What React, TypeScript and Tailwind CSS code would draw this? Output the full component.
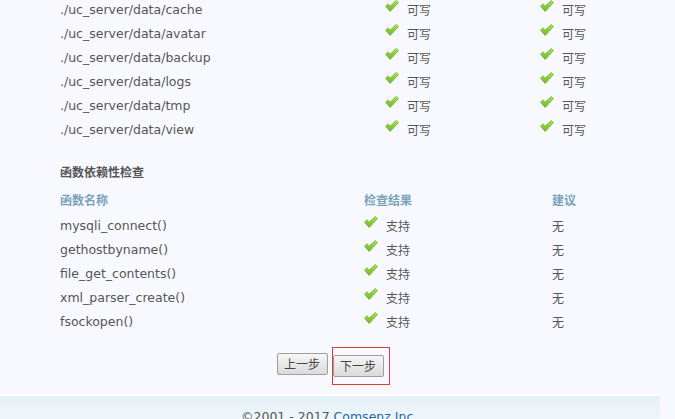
import React from 'react';

const dirs = ['cache', 'avatar', 'backup', 'logs', 'tmp', 'view'];
const funcs = ['mysqli_connect()', 'gethostbyname()', 'file_get_contents()', 'xml_parser_create()', 'fsockopen()'];

const latin = { fontFamily: '"DejaVu Sans", Verdana, sans-serif' };
const cjk = { fontFamily: '"Noto Sans CJK SC", "DejaVu Sans", sans-serif' };

function Check() {
    return <svg width="14" height="12" viewBox="0 0 14 12" className="-mt-2 shrink-0">
        <defs>
            <linearGradient id="ck" x1="0" y1="0" x2="0" y2="1">
                <stop offset="0" stopColor="#a8e64a" />
                <stop offset="1" stopColor="#6cb82a" />
            </linearGradient>
        </defs>
        <path d="M0.5 6.2 L3 3.8 L5.2 6 L11.2 0.4 L13.6 2.6 L5.2 11.5 Z" fill="url(#ck)" stroke="#5e9e24" strokeWidth="0.6" strokeLinejoin="round" />
    </svg>;
}

function Status({ text }: { text: string }) {
    return <div className="flex items-center gap-[8px]">
        <Check />
        <span style={cjk} className="text-[12px] text-[#555]">{text}</span>
    </div>;
}

export default function App() {
    return <div className="min-h-screen bg-[#f8f9fe] overflow-hidden">
        <div className="w-[660px]">
            <div className="pl-[60px] h-[396px]">
                {/* directory permissions */}
                <div className="-mt-[2px]">
                    {dirs.map(d => <div key={d} className="flex items-center h-[24px]">
                        <div style={latin} className="w-[325px] text-[12.5px] text-[#555]">./uc_server/data/{d}</div>
                        <div className="w-[155px]"><Status text="可写" /></div>
                        <div><Status text="可写" /></div>
                    </div>)}
                </div>

                <div style={cjk} className="mt-[18px] h-[24px] flex items-center text-[12px] font-bold text-[#555]">函数依赖性检查</div>

                <div className="mt-[4px] flex items-center h-[24px] text-[12px] font-bold text-[#79a2bc]" style={cjk}>
                    <div className="w-[304px]">函数名称</div>
                    <div className="w-[188px]">检查结果</div>
                    <div>建议</div>
                </div>
                <div className="mt-[2px]">
                    {funcs.map(f => <div key={f} className="flex items-center h-[24px]">
                        <div style={latin} className="w-[304px] text-[12.5px] text-[#555]">{f}</div>
                        <div className="w-[188px]"><Status text="支持" /></div>
                        <div style={cjk} className="text-[12px] text-[#555]">无</div>
                    </div>)}
                </div>

                <div className="mt-[19px] -ml-[60px] flex justify-center gap-[5px]">
                    <button style={cjk} className="w-[51px] h-[22px] text-[12px] text-[#444] border border-[#9e9e9e] rounded-[2px] bg-gradient-to-b from-[#f6f6f6] to-[#dadada]">上一步</button>
                    <div className="relative">
                        <button style={cjk} className="w-[51px] h-[22px] text-[12px] text-[#444] border border-[#9e9e9e] rounded-[2px] bg-gradient-to-b from-[#f6f6f6] to-[#dadada]">下一步</button>
                        <div className="absolute -left-[1px] -top-[6px] w-[58px] h-[38px] border border-[#dd3b3b] pointer-events-none" />
                    </div>
                </div>
            </div>
            <div className="h-[2px] bg-white" />
            <div className="h-[40px] bg-gradient-to-b from-[#e5f1f8] to-[#f5f9fc] pl-[241px] pt-[7px]">
                <span style={latin} className="text-[12.5px] text-[#555]">©2001 - 2017 <span className="text-[#2465a8]">Comsenz Inc.</span></span>
            </div>
        </div>
    </div>;
}
